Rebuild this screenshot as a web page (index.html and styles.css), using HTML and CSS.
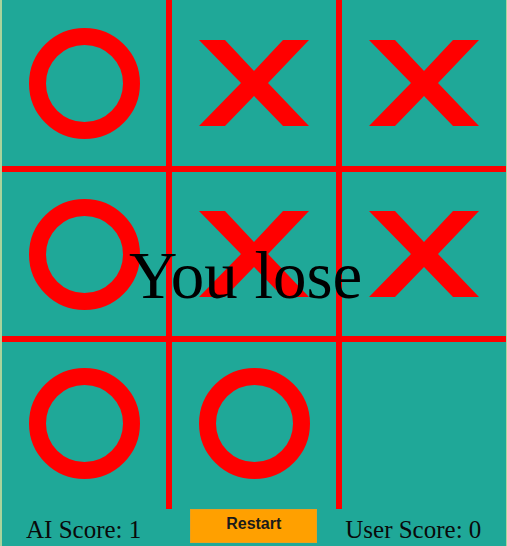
FILE: index.html
```html
<!DOCTYPE html>
<html>
<head>
<meta charset="utf-8">
<link rel="stylesheet" href="styles.css">
</head>
<body>
<div class="app">
  <div class="board">
    <div class="cell"><div class="o"></div></div>
    <div class="cell"><svg class="x" viewBox="0 0 110 86"><polygon points="0,0 26,0 55,31 84,0 110,0 69,43 110,86 84,86 55,56 26,86 0,86 42,43"/></svg></div>
    <div class="cell"><svg class="x" viewBox="0 0 110 86"><polygon points="0,0 26,0 55,31 84,0 110,0 69,43 110,86 84,86 55,56 26,86 0,86 42,43"/></svg></div>
    <div class="cell"><div class="o"></div></div>
    <div class="cell"><svg class="x" viewBox="0 0 110 86"><polygon points="0,0 26,0 55,31 84,0 110,0 69,43 110,86 84,86 55,56 26,86 0,86 42,43"/></svg></div>
    <div class="cell"><svg class="x" viewBox="0 0 110 86"><polygon points="0,0 26,0 55,31 84,0 110,0 69,43 110,86 84,86 55,56 26,86 0,86 42,43"/></svg></div>
    <div class="cell last-row"><div class="o"></div></div>
    <div class="cell last-row"><div class="o"></div></div>
    <div class="cell last-row"></div>
    <div class="message">You lose</div>
  </div>
  <div class="bar">
    <div class="score score-ai">AI Score: 1</div>
    <button class="restart">Restart</button>
    <div class="score score-user">User Score: 0</div>
  </div>
</div>
</body>
</html>
```
FILE: styles.css
```css
html, body {
  margin: 0;
  padding: 0;
}
body {
  background: #a9d49c;
  width: 507px;
  height: 546px;
  overflow: hidden;
}
.app {
  margin-left: 2px;
  width: 504px;
  height: 546px;
  background: #1fa898;
}
.board {
  position: relative;
  display: grid;
  grid-template-columns: 164px 164px 164px;
  grid-template-rows: 166px 164px 167px;
  gap: 6px;
  background: #ff0000;
}
.cell {
  background: #1fa898;
  display: flex;
  align-items: center;
  justify-content: center;
}
.cell.last-row {
  padding-bottom: 4px;
}
.o {
  width: 111px;
  height: 111px;
  box-sizing: border-box;
  border: 17px solid #ff0000;
  border-radius: 50%;
}
.x {
  width: 110px;
  height: 86px;
  fill: #ff0000;
  display: block;
}
.message {
  position: absolute;
  left: 127px;
  top: 242px;
  font-family: "Liberation Serif", "Times New Roman", serif;
  font-size: 67px;
  line-height: 67px;
  color: #000;
  white-space: nowrap;
}
.bar {
  display: flex;
  align-items: flex-start;
  height: 37px;
}
.score {
  font-family: "Liberation Serif", "Times New Roman", serif;
  font-size: 25px;
  line-height: 28px;
  color: #0a0a0a;
  margin-top: 7px;
  white-space: nowrap;
}
.score-ai {
  margin-left: 24px;
}
.restart {
  margin-left: 49px;
  width: 127px;
  height: 34px;
  padding: 0 0 5px 0;
  background: #ffa000;
  border: 1px solid #e8a020;
  font-family: "Liberation Sans", Arial, sans-serif;
  font-weight: bold;
  font-size: 16px;
  color: #1a1a1a;
}
.score-user {
  margin-left: 28px;
}
```
